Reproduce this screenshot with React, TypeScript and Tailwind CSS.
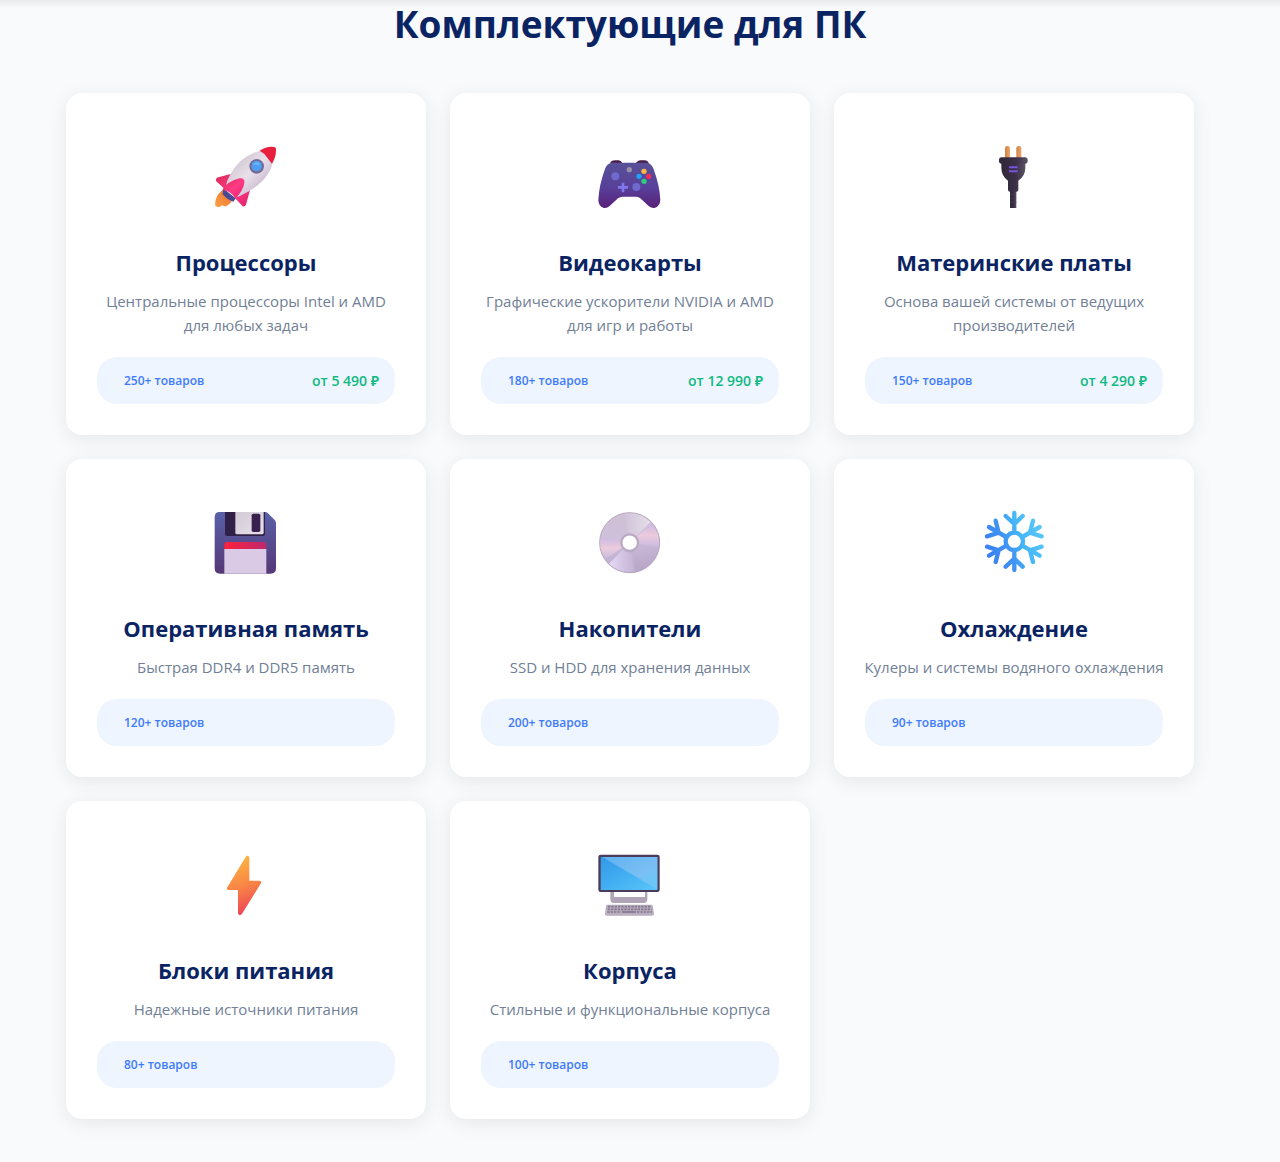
import type { ReactNode } from 'react'

interface Category {
  title: string
  description: string
  count: string
  price?: string
  icon: ReactNode
}

function Icon({ viewBox, children }: { viewBox: string; children: ReactNode }) {
  return (
    <svg viewBox={viewBox} className="h-[62px] w-[62px] overflow-visible" aria-hidden="true">
      {children}
    </svg>
  )
}

const RocketIcon = () => (
  <Icon viewBox="42 33 186 186">
    <defs>
      <linearGradient id="rocketBody" x1="0" y1="0" x2="1" y2="1">
        <stop offset="0.15" stopColor="#cfc3cf" />
        <stop offset="0.5" stopColor="#e8e0ea" />
        <stop offset="0.85" stopColor="#c5b2cb" />
      </linearGradient>
      <linearGradient id="rocketFin" x1="0" y1="0" x2="1" y2="1">
        <stop offset="0" stopColor="#d92a5a" />
        <stop offset="0.5" stopColor="#ff3c86" />
        <stop offset="1" stopColor="#e0246a" />
      </linearGradient>
      <linearGradient id="rocketFire" x1="1" y1="0" x2="0" y2="1">
        <stop offset="0" stopColor="#e8703a" />
        <stop offset="1" stopColor="#ffa03c" />
      </linearGradient>
    </defs>
    <path d="M70 164C54 174 44 190 46 213C53 218 62 216 67 210C70 214 77 216 84 210C91 205 95 199 97 194Z" fill="url(#rocketFire)" />
    <path d="M69 160L107 190L100 200Q83 196 68 178Z" fill="#4b4a94" />
    <path d="M92 117L55 127Q46 130 48 138L74 162L96 140ZM150 165L138 209Q135 216 128 214L104 188L122 166Z" fill="url(#rocketFin)" />
    <path d="M181 47C138 58 106 84 83 134Q76 152 82 160L106 182Q112 187 121 182C168 160 207 130 218 84Z" fill="url(#rocketBody)" />
    <path d="M179 47Q200 33 222 36Q229 37 228 45Q228 67 216 86Q210 80 203 70Q193 54 179 47Z" fill="#e8203f" />
    <path d="M67 165Q84 138 118 130Q136 128 133 145Q128 171 106 190Q98 178 88 172Q79 166 67 165Z" fill="url(#rocketFin)" />
    <circle cx="170" cy="94" r="22" fill="#746a91" />
    <circle cx="170" cy="93" r="16" fill="#4d9df2" />
    <path d="M158 88A16 16 0 0 1 182 86L174 91Z" fill="#67b5fa" />
  </Icon>
)

const GamepadIcon = () => (
  <Icon viewBox="39 3 186 186">
    <defs>
      <linearGradient id="padBody" x1="0" y1="0" x2="0" y2="1">
        <stop offset="0" stopColor="#585197" />
        <stop offset="0.55" stopColor="#58409a" />
        <stop offset="1" stopColor="#5a2078" />
      </linearGradient>
    </defs>
    <path d="M75 56Q78 46 90 46H101Q109 47 113 56ZM152 56Q158 46 167 46H179Q189 46 192 57Z" fill="#48204c" />
    <path d="M82 53H183Q198 53 205 70Q224 122 226 164Q225 184 208 189Q200 190 191 183L165 159Q159 155 151 155H113Q105 155 99 160L74 183Q64 191 55 188Q41 184 40 165Q42 120 61 69Q67 54 82 53Z" fill="url(#padBody)" />
    <circle cx="91" cy="94" r="12" fill="#7069ce" />
    <circle cx="154" cy="126" r="12" fill="#7069ce" />
    <path d="M114 113V142M99 127H129" stroke="#8079ed" strokeWidth="8" />
    <circle cx="133" cy="74" r="8" fill="#9b91a5" />
    <circle cx="177" cy="79" r="8" fill="#fbb83c" />
    <circle cx="162" cy="94" r="8" fill="#1fa1f4" />
    <circle cx="191" cy="94" r="8" fill="#f42b55" />
    <circle cx="177" cy="109" r="8" fill="#2dce7a" />
  </Icon>
)

const PlugIcon = () => (
  <Icon viewBox="36 33 186 186">
    <defs>
      <linearGradient id="plugBody" x1="0" y1="0" x2="1" y2="0">
        <stop offset="0" stopColor="#302839" />
        <stop offset="0.6" stopColor="#3b3048" />
        <stop offset="1" stopColor="#5b5265" />
      </linearGradient>
      <linearGradient id="plugPin" x1="0" y1="0" x2="1" y2="0">
        <stop offset="0" stopColor="#ce8346" />
        <stop offset="1" stopColor="#eca66a" />
      </linearGradient>
    </defs>
    <rect x="105" y="33" width="15" height="44" rx="7" fill="url(#plugPin)" />
    <rect x="139" y="33" width="15" height="44" rx="7" fill="url(#plugPin)" />
    <rect x="120" y="165" width="19" height="54" fill="url(#plugBody)" />
    <path d="M120 178H139M120 190H139M120 202H139" stroke="#4a4056" strokeWidth="2" />
    <path d="M94 80H166V100Q165 125 145 137V164Q145 170 139 170H120Q114 170 114 164V137Q95 125 94 100Z" fill="url(#plugBody)" />
    <rect x="87" y="67" width="86" height="19" rx="8" fill="url(#plugBody)" />
    <path d="M117 97H143M117 109H143" stroke="#7853dc" strokeWidth="6" />
  </Icon>
)

const FloppyIcon = () => (
  <Icon viewBox="42 36 186 186">
    <defs>
      <linearGradient id="diskBody" x1="0" y1="0" x2="0" y2="1">
        <stop offset="0" stopColor="#5961a8" />
        <stop offset="1" stopColor="#563777" />
      </linearGradient>
      <linearGradient id="diskStripe" x1="0" y1="0" x2="1" y2="0">
        <stop offset="0" stopColor="#ff203b" />
        <stop offset="1" stopColor="#bd286d" />
      </linearGradient>
      <linearGradient id="diskShutter" x1="0" y1="0" x2="1" y2="1">
        <stop offset="0" stopColor="#d3cbd4" />
        <stop offset="1" stopColor="#e6dfea" />
      </linearGradient>
    </defs>
    <path d="M59 36H195Q200 36 204 40L224 60Q228 64 228 69V205Q228 221 211 221H60Q44 221 44 205V52Q44 36 59 36Z" fill="url(#diskBody)" />
    <path d="M75 36H195V102Q195 108 189 108H82Q75 108 75 101Z" fill="#302047" />
    <path d="M106 36H191V98Q191 103 186 103H111Q106 103 106 98Z" fill="url(#diskShutter)" />
    <rect x="155" y="41" width="26" height="55" rx="5" fill="#38204f" />
    <path d="M82 126H190Q199 126 199 135V149H73V135Q73 126 82 126Z" fill="url(#diskStripe)" />
    <path d="M73 147H199V221H73Z" fill="#dacae5" />
  </Icon>
)

const DiscIcon = () => (
  <Icon viewBox="39 36 186 186">
    <defs>
      <linearGradient id="discBase" x1="0" y1="0" x2="0.2" y2="1">
        <stop offset="0" stopColor="#cfc1d4" />
        <stop offset="0.5" stopColor="#cfc0dc" />
        <stop offset="1" stopColor="#baa8ca" />
      </linearGradient>
      <linearGradient id="discPink" x1="0" y1="0" x2="0" y2="1">
        <stop offset="0" stopColor="#cbb9e4" />
        <stop offset="0.5" stopColor="#eccbdc" />
        <stop offset="1" stopColor="#c8bae0" />
      </linearGradient>
      <linearGradient id="discLight" x1="0" y1="0" x2="1" y2="0">
        <stop offset="0" stopColor="#d0c3d6" />
        <stop offset="1" stopColor="#e6deec" />
      </linearGradient>
      <linearGradient id="discLilac" x1="0" y1="0" x2="1" y2="0">
        <stop offset="0" stopColor="#e6d8f7" />
        <stop offset="1" stopColor="#c3b2d2" />
      </linearGradient>
    </defs>
    <circle cx="134" cy="128" r="90" fill="url(#discBase)" stroke="#b5a5bd" strokeWidth="3" />
    <path d="M134 128L47 112A88 88 0 0 0 61 177Z" fill="url(#discPink)" />
    <path d="M134 128L200 71A88 88 0 0 1 221 141Z" fill="url(#discPink)" />
    <path d="M134 128L120 41A88 88 0 0 1 196 66Z" fill="url(#discLight)" />
    <path d="M134 128L72 191A88 88 0 0 0 150 214Z" fill="url(#discLilac)" />
    <circle cx="134" cy="128" r="25" fill="white" stroke="#b9aac4" strokeWidth="7" />
  </Icon>
)

const SnowflakeIcon = () => (
  <Icon viewBox="36 36 186 186">
    <defs>
      <linearGradient id="snow" gradientUnits="userSpaceOnUse" x1="48" y1="160" x2="215" y2="90">
        <stop offset="0" stopColor="#3b7ff2" />
        <stop offset="0.35" stopColor="#3f92f4" />
        <stop offset="0.65" stopColor="#45b7f8" />
        <stop offset="1" stopColor="#58c7f8" />
      </linearGradient>
    </defs>
    <g fill="none" stroke="url(#snow)" strokeWidth="13" strokeLinecap="round" strokeLinejoin="round">
      <circle cx="133" cy="124" r="26" />
      <path d="M133 39V97M107 48L133 72L158 48" />
      <path d="M133 152V210M107 200L133 176L158 200" />
      <path d="M57 81L109 111M77 62L86 98L51 109" />
      <path d="M157 137L209 167M189 186L180 151L215 140" />
      <path d="M57 167L109 137M51 140L86 151L77 186" />
      <path d="M157 111L209 81M189 62L180 98L215 109" />
    </g>
  </Icon>
)

const BoltIcon = () => (
  <Icon viewBox="42 27 186 186">
    <defs>
      <linearGradient id="bolt" x1="0.4" y1="0" x2="0.6" y2="1">
        <stop offset="0" stopColor="#fbb642" />
        <stop offset="0.5" stopColor="#f98546" />
        <stop offset="1" stopColor="#ec4057" />
      </linearGradient>
    </defs>
    <path d="M137 36Q140 31 145 33Q148 34 148 39V107H179Q186 109 183 115L127 205Q123 212 118 210Q114 209 114 203V135H84Q79 133 81 128Z" fill="url(#bolt)" />
  </Icon>
)

const ComputerIcon = () => (
  <Icon viewBox="39 27 186 186">
    <defs>
      <linearGradient id="screen" x1="0" y1="0" x2="1" y2="1">
        <stop offset="0" stopColor="#3297e8" />
        <stop offset="0.5" stopColor="#42aff2" />
        <stop offset="1" stopColor="#5bc6f8" />
      </linearGradient>
      <linearGradient id="glare" x1="0" y1="0" x2="1" y2="1">
        <stop offset="0" stopColor="#62b2ef" />
        <stop offset="0.6" stopColor="#79bff4" />
        <stop offset="1" stopColor="#64cafa" />
      </linearGradient>
    </defs>
    <path d="M76 139H87V156H180V139H187V163Q187 174 176 174H87Q76 174 76 163Z" fill="#b0a5b7" />
    <rect x="40" y="29" width="184" height="112" rx="7" fill="#4c3b59" />
    <rect x="47" y="36" width="170" height="99" fill="url(#screen)" />
    <path d="M52 36H217V133Z" fill="url(#glare)" />
    <path d="M67 179H199Q202 179 203 183L207 207Q207 212 201 212H65Q60 212 60 207L63 183Q64 179 67 179Z" fill="#b9adbf" />
    <path d="M69 185H198M68 193H200" stroke="#84788e" strokeWidth="5" strokeDasharray="7 3" />
    <path d="M67 201H108M156 201H201" stroke="#84788e" strokeWidth="5" strokeDasharray="7 3" />
    <path d="M111 201H153" stroke="#84788e" strokeWidth="5" />
  </Icon>
)

const categories: Category[] = [
  { title: 'Процессоры', description: 'Центральные процессоры Intel и AMD для любых задач', count: '250+ товаров', price: 'от 5 490 ₽', icon: <RocketIcon /> },
  { title: 'Видеокарты', description: 'Графические ускорители NVIDIA и AMD для игр и работы', count: '180+ товаров', price: 'от 12 990 ₽', icon: <GamepadIcon /> },
  { title: 'Материнские платы', description: 'Основа вашей системы от ведущих производителей', count: '150+ товаров', price: 'от 4 290 ₽', icon: <PlugIcon /> },
  { title: 'Оперативная память', description: 'Быстрая DDR4 и DDR5 память', count: '120+ товаров', icon: <FloppyIcon /> },
  { title: 'Накопители', description: 'SSD и HDD для хранения данных', count: '200+ товаров', icon: <DiscIcon /> },
  { title: 'Охлаждение', description: 'Кулеры и системы водяного охлаждения', count: '90+ товаров', icon: <SnowflakeIcon /> },
  { title: 'Блоки питания', description: 'Надежные источники питания', count: '80+ товаров', icon: <BoltIcon /> },
  { title: 'Корпуса', description: 'Стильные и функциональные корпуса', count: '100+ товаров', icon: <ComputerIcon /> },
]

function CategoryCard({ category }: { category: Category }) {
  return (
    <article className="rounded-2xl bg-white p-[31px] text-center shadow-[0_4px_20px_rgba(0,0,0,0.08)]">
      <div className="mb-[18px] flex h-[105px] items-center justify-center pr-[2px]">{category.icon}</div>
      <h2 className="mb-3 text-[22px] leading-[30px] font-bold text-[#0a2463]">{category.title}</h2>
      <p className="-mx-1 mb-5 text-[15px] leading-6 text-[#718096]">{category.description}</p>
      <div className="flex h-[47px] items-center justify-between rounded-[20px] bg-[#eff5ff] pr-4 pl-[27px]">
        <span className="text-[12px] font-semibold text-[#3e7bfa]">{category.count}</span>
        {category.price && <span className="text-[14px] font-semibold text-[#10b981]">{category.price}</span>}
      </div>
    </article>
  )
}

export default function App() {
  return (
    <div className="min-h-screen bg-[#f9fafc] font-['Open_Sans','Noto_Sans',sans-serif]">
      {/* Тень от шапки */}
      <div className="h-2 bg-linear-to-b from-[#e9eaec] to-[#f9fafc]" />
      <main className="pr-5 pb-[43px]">
        <div className="mx-auto max-w-[1128px]">
          <h1 className="mb-[53px] text-center text-[37px] leading-8 font-bold text-[#0a2463]">Комплектующие для ПК</h1>
          <div className="grid grid-cols-1 gap-6 md:grid-cols-2 lg:grid-cols-3">
            {categories.map(category => (
              <CategoryCard key={category.title} category={category} />
            ))}
          </div>
        </div>
      </main>
    </div>
  )
}
